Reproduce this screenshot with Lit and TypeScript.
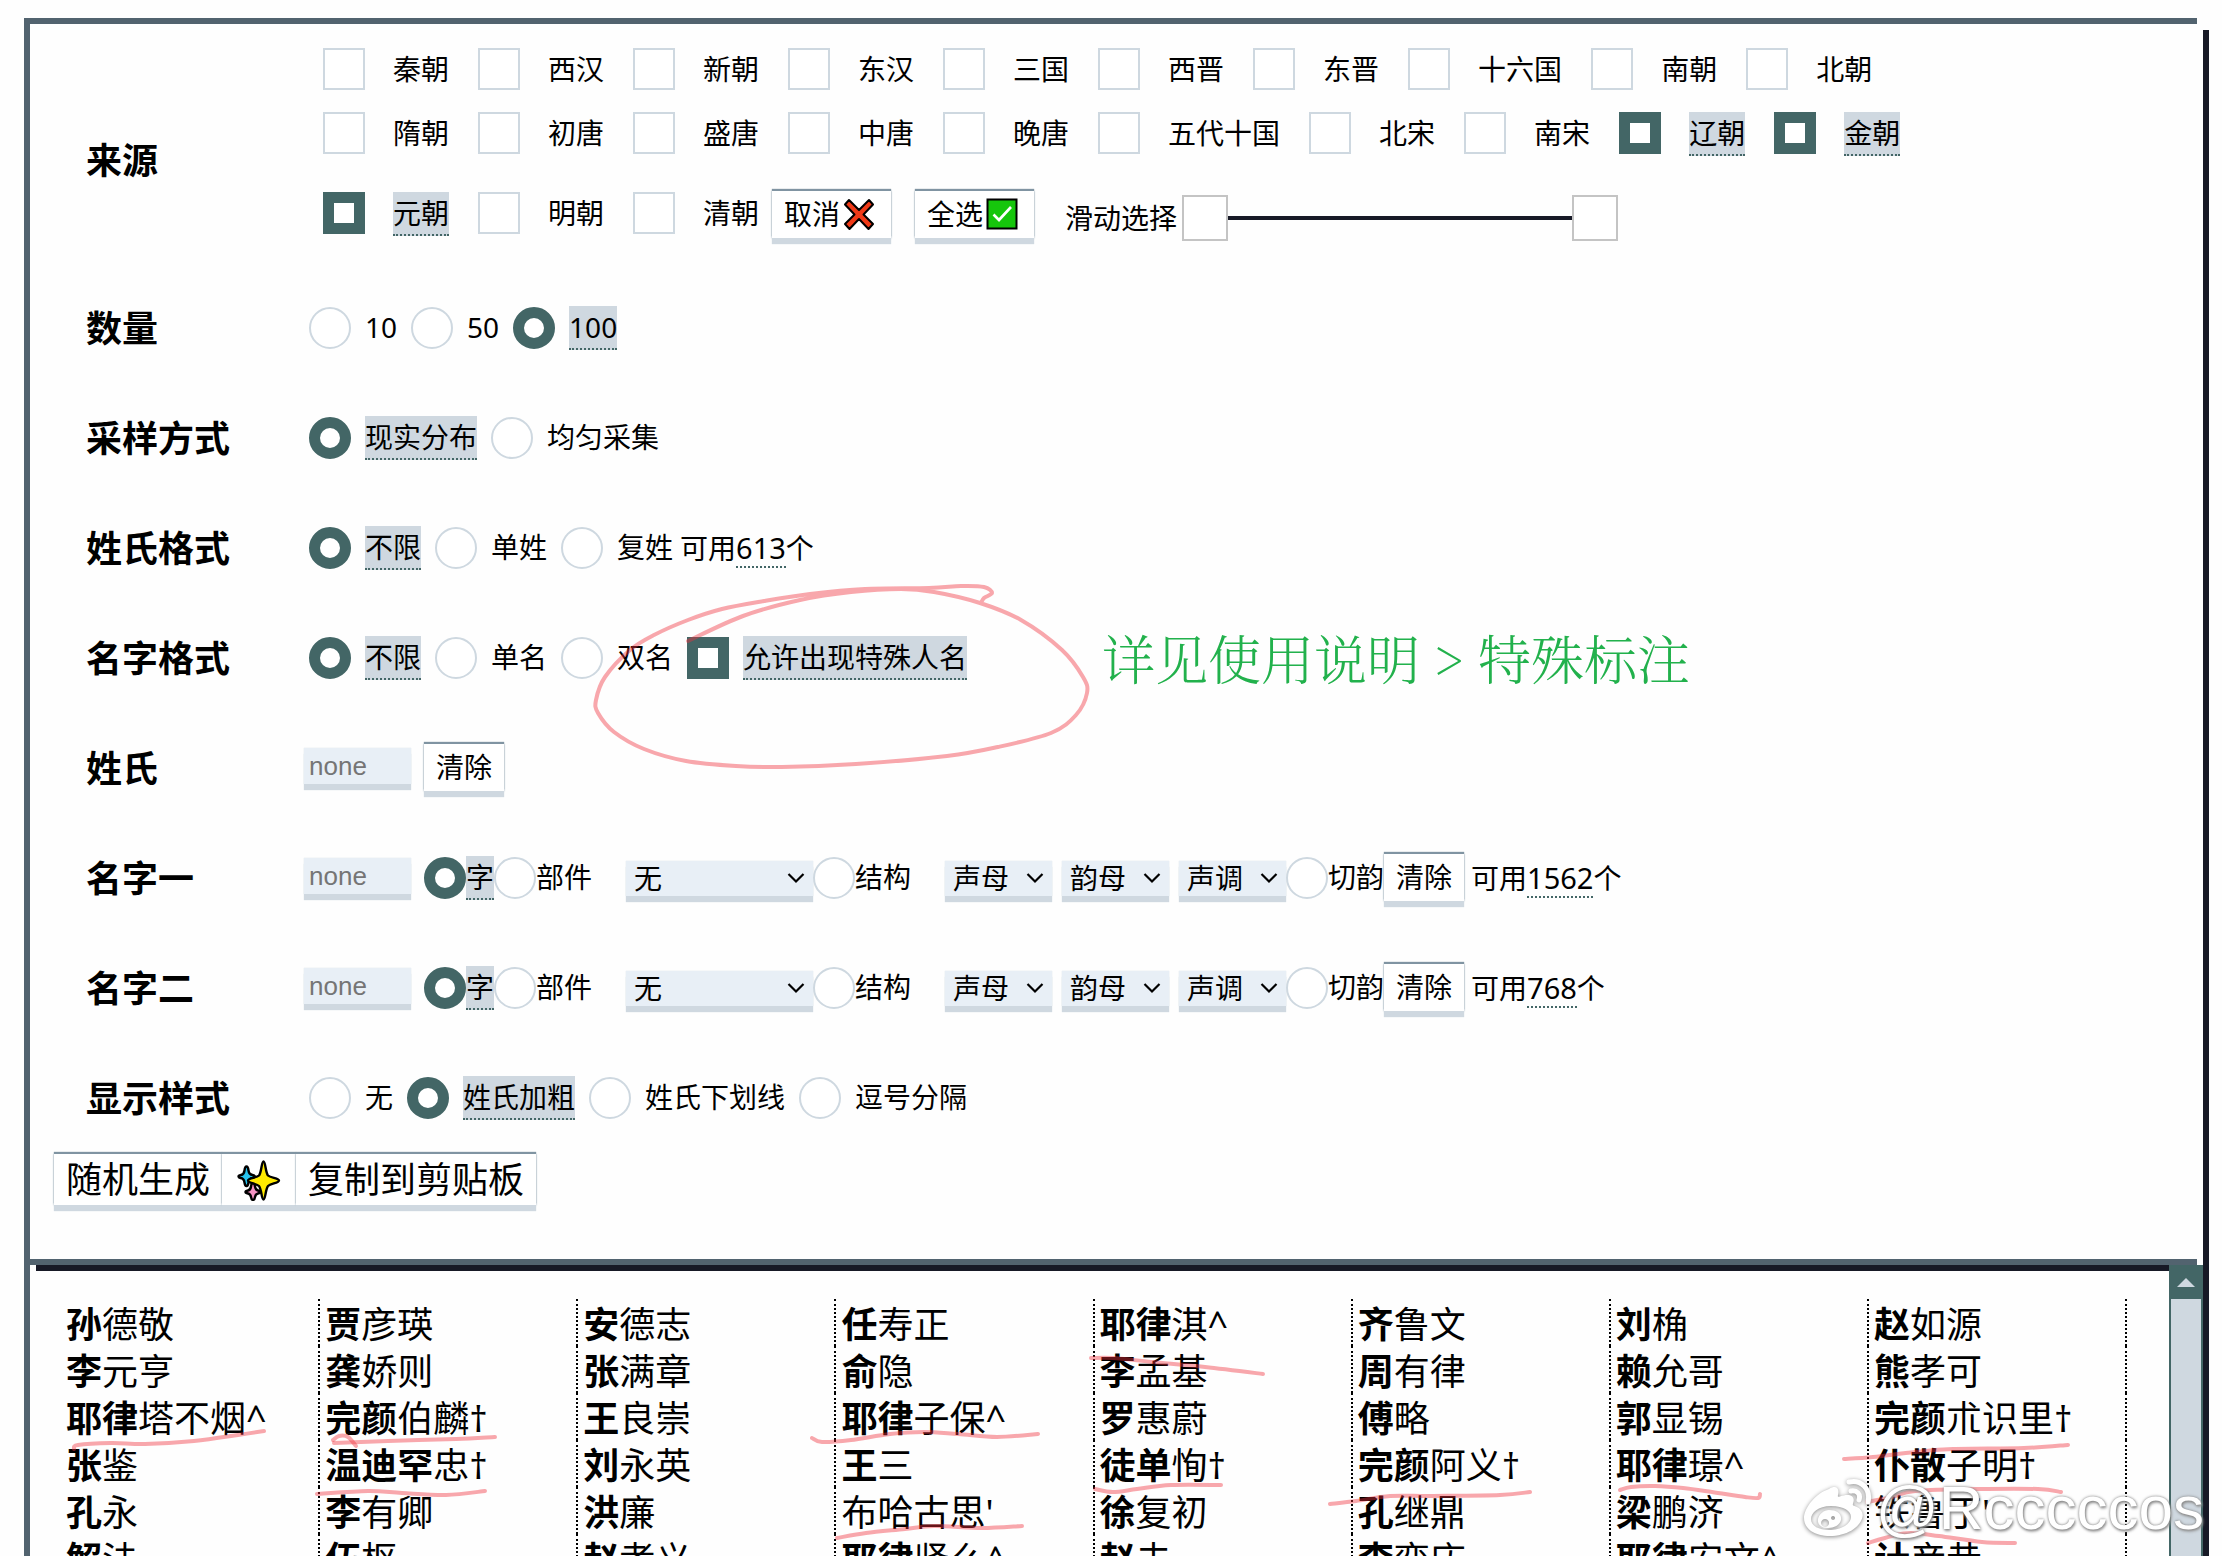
import { LitElement, html, css, svg, nothing } from "lit";
import { customElement, property } from "lit/decorators.js";

const FONT = css`"Noto Sans", "Noto Sans CJK SC", sans-serif`;

type Pt = [number, number];

/** Smooth curve through a list of points (Catmull-Rom to cubic Bezier). */
function smooth(points: Pt[]): string {
  let d = `M${points[0][0]} ${points[0][1]}`;
  for (let i = 0; i < points.length - 1; i++) {
    const p0 = points[Math.max(i - 1, 0)];
    const p1 = points[i];
    const p2 = points[i + 1];
    const p3 = points[Math.min(i + 2, points.length - 1)];
    const c = [
      p1[0] + (p2[0] - p0[0]) / 6, p1[1] + (p2[1] - p0[1]) / 6,
      p2[0] - (p3[0] - p1[0]) / 6, p2[1] - (p3[1] - p1[1]) / 6,
      p2[0], p2[1],
    ].map((n) => n.toFixed(1));
    d += `C${c.join(" ")}`;
  }
  return d;
}

const STROKES: Pt[][] = [
  [[688, 641], [743, 616], [800, 600], [851, 592], [901, 589], [934, 592], [980, 603], [1021, 620],
   [1062, 650], [1083, 677], [1087, 693], [1076, 715], [1051, 733], [998, 747], [947, 756], [856, 764],
   [782, 767], [736, 766], [686, 761], [644, 749], [614, 732], [598, 713], [596, 700], [605, 677],
   [630, 650], [654, 635], [688, 620], [722, 609], [764, 601], [810, 594], [865, 589], [929, 588],
   [961, 586], [984, 587], [992, 593], [984, 598], [981, 603]],
  [[74, 1449], [78, 1445], [111, 1443], [145, 1444], [194, 1441], [238, 1435], [264, 1431]],
  [[333, 1440], [339, 1436], [348, 1437], [356, 1446]],
  [[334, 1443], [388, 1441], [456, 1439], [495, 1437]],
  [[317, 1494], [368, 1491], [402, 1493], [446, 1495], [485, 1491]],
  [[812, 1438], [822, 1442], [851, 1440], [890, 1434], [924, 1432], [958, 1434], [997, 1437], [1038, 1434]],
  [[837, 1538], [866, 1533], [905, 1529], [934, 1526], [982, 1528], [1022, 1526]],
  [[1091, 1358], [1113, 1358], [1152, 1362], [1205, 1367], [1263, 1374]],
  [[1095, 1489], [1113, 1492], [1137, 1489], [1171, 1485], [1221, 1485]],
  [[1330, 1504], [1356, 1501], [1390, 1496], [1433, 1496], [1500, 1495], [1530, 1492]],
  [[1620, 1490], [1631, 1487], [1655, 1486], [1683, 1488], [1712, 1492], [1745, 1497], [1758, 1498], [1760, 1494]],
  [[1844, 1459], [1873, 1457], [1915, 1452], [1953, 1449], [2024, 1448], [2068, 1445]],
  [[1867, 1502], [1892, 1497], [1915, 1491], [1977, 1489], [2038, 1489], [2061, 1492]],
  [[1868, 1543], [1892, 1536], [1911, 1533], [1939, 1536], [1982, 1542], [2015, 1543]],
];

const DYNASTIES = [
  ["秦朝", "西汉", "新朝", "东汉", "三国", "西晋", "东晋", "十六国", "南朝", "北朝"],
  ["隋朝", "初唐", "盛唐", "中唐", "晚唐", "五代十国", "北宋", "南宋", "辽朝", "金朝"],
  ["元朝", "明朝", "清朝"],
];
const CHOSEN = new Set(["辽朝", "金朝", "元朝"]);

/** Each name is "surname|given name"; the surname is set in bold. */
const NAMES = [
  ["孙|德敬", "贾|彦瑛", "安|德志", "任|寿正", "耶律|淇^", "齐|鲁文", "刘|桷", "赵|如源"],
  ["李|元亨", "龚|娇则", "张|满章", "俞|隐", "李|孟基", "周|有律", "赖|允哥", "熊|孝可"],
  ["耶律|塔不烟^", "完颜|伯麟†", "王|良崇", "耶律|子保^", "罗|惠蔚", "傅|略", "郭|显锡", "完颜|朮识里†"],
  ["张|鉴", "温迪罕|忠†", "刘|永英", "王|三", "徒单|恂†", "完颜|阿义†", "耶律|璟^", "仆散|子明†"],
  ["孔|永", "李|有卿", "洪|廉", "|布哈古思'", "徐|复初", "孔|继鼎", "梁|鹏济", "|铁鲁丁'"],
  ["解|法", "伍|枢", "赵|孝义", "耶律|贤么^", "赵|去", "李|奕庆", "耶律|安文^", "计|彦恭"],
];

const crossIcon = svg`<svg class="emoji" viewBox="0 0 38 38" aria-hidden="true">
  <path d="M9 5 19 15 29 5l4 4.500L23.500 19.500 33 29l-4.500 5L19 24 9.500 34 5 29l9.500-9.500L5 9.500Z"
    fill="#f03a17" stroke="#000" stroke-width="2" stroke-linejoin="round"/></svg>`;
const checkIcon = svg`<svg class="emoji" viewBox="0 0 38 38" aria-hidden="true">
  <path d="M4.500 4.500h29v29h-29z" fill="#16c60c" stroke="#000" stroke-width="2"/>
  <path d="m10.500 19.500 5.500 5.500 12-13" fill="none" stroke="#fff" stroke-width="2.600"/></svg>`;
const sparkIcon = svg`<svg class="spark" viewBox="0 0 50 42" aria-hidden="true" stroke="#000" stroke-width="2.400" stroke-linejoin="round">
  <path d="M12.500 7.500q1.500 0 2 4 .5 4 4 4.500 2.500.5 2.500 1.500t-2.500 1.500q-3.500.5-4 4.500-.5 3.500-2 3.500t-2-3.500q-.5-4-4-4.500Q4.500 18.500 4.500 17.500t2.500-1.500q3-.5 3.500-4.500.5-4 2-4Z" fill="#26c4f0"/>
  <path d="M19 24q1.500 0 2 3.500.5 3.500 3 4 2.500.5 2.500 1.500t-2.500 1.500q-2.500.5-3 3.500-.5 3-2 3t-2-3q-.5-3-3-3.500-2.500-.5-2.500-1.500t2.500-1.500q2.500-.5 3-4 .5-3.500 2-3.500Z" fill="#f493c2"/>
  <path d="M29.500 2.500c2 0 2 11 4.500 14 2.500 2.500 11 2.500 11 5s-8.500 3-11 5.500c-2.500 3-2.500 13.500-4.500 13.500s-2-10.500-4.500-13.500c-2.500-2.500-11-3-11-5.500s8.500-2.500 11-5c2.500-3 2.500-14 4.500-14Z" fill="#ffea00"/></svg>`;

const controls = css`
  * { box-sizing: border-box; }
  .check, .radio { display: inline-flex; align-items: center; }
  .check input, .radio input {
    appearance: none;
    flex: none;
    width: 42px;
    height: 42px;
    margin: 0;
    border: 2px solid #ced8e0;
    background: #fff;
  }
  .radio input { border-radius: 50%; }
  .check input:checked, .radio input:checked { border: 11px solid #436666; }
  .text { line-height: 42px; border-bottom: 2px solid transparent; white-space: nowrap; }
  input:checked + .text { background: #cfd8e0; border-bottom: 2px dotted #436666; }
  .button {
    display: inline-flex;
    align-items: center;
    height: 47px;
    padding: 0 12px;
    border: 0;
    color: #000;
    background: #fff;
    font: inherit;
    white-space: nowrap;
    box-shadow: 0 -2px 1px #8094a2, 0 6px 1px #cfd8e0, 0 0 2px #8fa3b0;
  }
  .field {
    width: 107px;
    height: 36px;
    padding: 0 5px;
    border: 0;
    border-radius: 0;
    background: #e8eff6;
    color: #000;
    font: 26px/36px "Liberation Sans", Arial, sans-serif;
    box-shadow: 0 6px 1px #cfd8e0, 0 0 1px #cfd8e0;
  }
  .field::placeholder { color: #757575; opacity: 1; }
  .count { border-bottom: 2px dotted #436666; }
`;

/** Drop-down with its own chevron. */
@customElement("name-select")
export class NameSelect extends LitElement {
  @property() option = "";
  @property() name = "";
  static styles = css`
    :host { display: grid; height: 35px; width: 107px; }
    select, svg { grid-area: 1 / 1; }
    select {
      appearance: none;
      width: 100%;
      height: 35px;
      padding: 0 8px;
      border: 0;
      border-radius: 0;
      background: #e8eff6;
      color: #000;
      font: 28px/35px ${FONT};
      box-shadow: 0 6px 1px #cfd8e0, 0 0 1px #cfd8e0;
    }
    svg { width: 18px; height: 12px; margin-right: 8px; place-self: center end; pointer-events: none; }
  `;
  render() {
    return html`<select aria-label=${this.name}><option>${this.option}</option></select>
      <svg viewBox="0 0 18 12" aria-hidden="true"><path d="m1.500 2 7.500 7.500L16.500 2" fill="none" stroke="#000" stroke-width="2.200"/></svg>`;
  }
}

/** Two-handled slider made of two ranges that share one track. */
@customElement("span-slider")
export class SpanSlider extends LitElement {
  static styles = css`
    :host { display: grid; width: 436px; height: 46px; }
    input {
      grid-area: 1 / 1;
      appearance: none;
      width: 100%;
      height: 46px;
      margin: 0;
      background: none;
      pointer-events: none;
    }
    .from { background: linear-gradient(#171926, #171926) center / 100% 4px no-repeat; }
    input::-webkit-slider-thumb {
      appearance: none;
      box-sizing: border-box;
      width: 46px;
      height: 46px;
      border: 2px solid #c4c4c4;
      background: #fff;
      pointer-events: auto;
    }
  `;
  render() {
    return html`<input class="from" type="range" min="0" max="22" value="0" aria-label="起始朝代" />
      <input type="range" min="0" max="22" value="22" aria-label="结束朝代" />`;
  }
}

@customElement("app-root")
export class AppRoot extends LitElement {
  static styles = [controls, css`
    :host {
      display: flex;
      position: relative;
      height: 100vh;
      padding: 18px 13px 0 24px;
      box-sizing: border-box;
      overflow: hidden;
      background: #fefefe;
      color: #000;
      font: 28px/42px ${FONT};
    }
    .panel {
      flex: 1;
      min-width: 0;
      display: flex;
      flex-direction: column;
      border-left: 6px solid #52636f;
    }
    .rail { flex: none; width: 6px; margin-top: 12px; background: #171926; }
    .form {
      margin-right: 6px;
      padding: 24px 0 54px;
      border: solid #52636f;
      border-width: 6px 0;
      flex: none;
    }
    .row {
      display: grid;
      grid-template-columns: 218px 1fr;
      align-items: center;
      height: 110px;
      padding-left: 56px;
    }
    .title { margin: 0; font-size: 36px; line-height: 47px; font-weight: 700; white-space: nowrap; }
    .row.source { height: 225px; }
    .checks { display: flex; flex-direction: column; gap: 20px; padding: 0 0 37px 19px; }
    .line { display: flex; gap: 29px; height: 44px; }
    .line .check { gap: 28px; align-items: flex-start; }
    .line:last-child { margin-top: 16px; }
    .line:last-child { align-items: center; gap: 0; }
    .line:last-child .check { margin-right: 29px; }
    .line:last-child .check:nth-of-type(3) { margin-right: 13px; }
    .line .button + .button { margin: 0 31px 0 24px; }
    .slide { display: inline-flex; align-items: center; gap: 5px; padding-top: 7px; white-space: nowrap; }
    .options { display: flex; align-items: center; gap: 14px; padding-left: 5px; }
    .options .check, .options .radio { gap: 14px; }
    .options .available { margin-left: -7px; }
    .remark { margin-left: 121px; padding-bottom: 2px; color: #22b14c; font: 53px/60px "Noto Serif CJK SC", "Liberation Serif", "Noto Sans CJK SC", serif; font-weight: 300; white-space: nowrap; }
    .fields { display: flex; align-items: center; }
    .fields .field { margin: 0 13px 4px 0; }
    .fields .button { margin-bottom: 2px; }
    .spread { margin-left: 34px; }
    .wide { width: 187px; }
    .sounds { display: flex; gap: 10px; margin-left: 34px; }
    .available { white-space: nowrap; }
    .fields .available { margin-left: 7px; }
    .count { display: inline-block; font-size: 29px; line-height: 36px; }
    .actions { display: flex; padding: 1px 0 0 24px; }
    .actions .button { height: 51px; font-size: 36px; }
    .emoji { width: 38px; height: 38px; margin-right: 1px; }
    .spark { width: 50px; height: 42px; }
    .results { flex: 1; min-height: 0; display: flex; }
    .view { flex: 1; min-width: 0; overflow: hidden; padding: 34px 42px 0 31px; background: linear-gradient(#171926, #171926) 6px 0 / 100% 6px no-repeat; }
    .names { width: 100%; table-layout: fixed; border-collapse: collapse; font-size: 36px; line-height: 43px; }
    .names td { height: 47px; padding: 4px 0 0 5px; border-right: 2px dotted #000; white-space: nowrap; }
    .scroll { flex: none; width: 34px; display: flex; flex-direction: column; border: solid #436666; border-width: 0 2px; background: #cfd8e0; }
    .up { height: 34px; padding: 0; border: 0; background: #436666; display: grid; place-items: center; }
    .up svg { width: 18px; height: 9px; }
    .ink { position: absolute; left: 0; top: 0; width: 2222px; height: 1556px; pointer-events: none; fill: none; stroke: #f0303c; stroke-opacity: .42; stroke-width: 4; stroke-linecap: round; }
    .mark {
      position: absolute;
      right: 18px;
      bottom: 14px;
      display: flex;
      align-items: center;
      gap: 4px;
      color: #fff;
      font: 62px/68px "Liberation Sans", Arial, sans-serif;
      text-shadow: 0 0 3px #777, 1px 2px 3px #999;
      pointer-events: none;
    }
    .mark svg { width: 68px; height: 60px; filter: drop-shadow(0 1px 2px #888); }
  `];

  private check(label: string, checked: boolean) {
    return html`<label class="check"><input type="checkbox" .checked=${checked} /><span class="text">${label}</span></label>`;
  }

  private radio(group: string, label: string, checked = false) {
    return html`<label class="radio"><input type="radio" name=${group} .checked=${checked} /><span class="text">${label}</span></label>`;
  }

  private radioRow(title: string, group: string, labels: string[], active: number, extra: unknown = nothing) {
    return html`<div class="row" role="group" aria-label=${title}>
      <h2 class="title">${title}</h2>
      <div class="options">${labels.map((l, i) => this.radio(group, l, i === active))}${extra}</div>
    </div>`;
  }

  private available(n: string) {
    return html`<span class="available">可用<span class="count">${n}</span>个</span>`;
  }

  private charRow(title: string, group: string, n: string) {
    return html`<div class="row" role="group" aria-label=${title}>
      <h2 class="title">${title}</h2>
      <div class="fields">
        <input class="field" type="text" placeholder="none" aria-label=${title} />
        ${this.radio(group, "字", true)}${this.radio(group, "部件")}
        <name-select class="spread wide" option="无" name="结构类型"></name-select>
        ${this.radio(group, "结构")}
        <div class="sounds">
          <name-select option="声母" name="声母"></name-select>
          <name-select option="韵母" name="韵母"></name-select>
          <name-select option="声调" name="声调"></name-select>
        </div>
        ${this.radio(group, "切韵")}
        <button class="button" type="button">清除</button>
        ${this.available(n)}
      </div>
    </div>`;
  }

  render() {
    return html`
      <main class="panel">
        <form class="form">
          <div class="row source" role="group" aria-label="来源">
            <h2 class="title">来源</h2>
            <div class="checks">
              ${DYNASTIES.map((names, i) => html`<div class="line">
                ${names.map((n) => this.check(n, CHOSEN.has(n)))}
                ${i === 2 ? html`
                  <button class="button" type="button">取消${crossIcon}</button>
                  <button class="button" type="button">全选${checkIcon}</button>
                  <div class="slide">滑动选择<span-slider></span-slider></div>` : nothing}
              </div>`)}
            </div>
          </div>
          ${this.radioRow("数量", "amount", ["10", "50", "100"], 2)}
          ${this.radioRow("采样方式", "sampling", ["现实分布", "均匀采集"], 0)}
          ${this.radioRow("姓氏格式", "surname-form", ["不限", "单姓", "复姓"], 0, this.available("613"))}
          ${this.radioRow("名字格式", "given-form", ["不限", "单名", "双名"], 0, html`
            ${this.check("允许出现特殊人名", true)}
            <span class="remark">详见使用说明 &gt; 特殊标注</span>`)}
          <div class="row" role="group" aria-label="姓氏">
            <h2 class="title">姓氏</h2>
            <div class="fields">
              <input class="field" type="text" placeholder="none" aria-label="姓氏" />
              <button class="button" type="button">清除</button>
            </div>
          </div>
          ${this.charRow("名字一", "first", "1562")}
          ${this.charRow("名字二", "second", "768")}
          ${this.radioRow("显示样式", "display", ["无", "姓氏加粗", "姓氏下划线", "逗号分隔"], 1)}
          <div class="actions">
            <button class="button" type="button">随机生成</button>
            <button class="button" type="button" aria-label="特效">${sparkIcon}</button>
            <button class="button" type="button">复制到剪贴板</button>
          </div>
        </form>
        <section class="results">
          <div class="view">
            <table class="names"><tbody>
              ${NAMES.map((row) => html`<tr>${row.map((n) => {
                const [family, given] = n.split("|");
                return html`<td><b>${family}</b>${given}</td>`;
              })}</tr>`)}
            </tbody></table>
          </div>
          <div class="scroll">
            <button class="up" type="button" aria-label="向上滚动">
              <svg viewBox="0 0 18 9" aria-hidden="true"><path d="M9 0 18 9H0Z" fill="#cfd8e0"/></svg>
            </button>
          </div>
        </section>
      </main>
      <div class="rail"></div>
      <svg class="ink" viewBox="0 0 2222 1556" aria-hidden="true">
        ${STROKES.map((s) => svg`<path d=${smooth(s)} />`)}
      </svg>
      <div class="mark">
        <svg viewBox="0 0 68 60" aria-hidden="true">
          <path fill="#fff" fill-rule="evenodd" d="M25 11c6-4 11-2 9 6-.5 2 0 2 2 1.500 9-3.500 16-1 13 7-.5 1.500 0 2 1.500 2.500 6 2 9 6 8 11C56 50 42 58 26 58 11 58 0 51 0 40 0 30 12 15 25 11Zm2 17c-13 0-20 7-20 13 0 7 8 11 18 11 12 0 22-6 22-13 0-6-7-11-20-11Zm-2 4c8 0 13 4 12 10-1 5-7 8-13 8-7 0-11-4-10-9 1-5 6-9 11-9Zm-4 9a4 4 0 1 0 .1 0Zm8-3a2 2 0 1 0 .1 0Z"/>
          <path fill="none" stroke="#fff" stroke-width="5" stroke-linecap="round" d="M45 4c12-3 22 7 19 20M47 13c6-1 10 3 8 9"/>
        </svg>
        <span>@Rcccccos</span>
      </div>`;
  }
}
